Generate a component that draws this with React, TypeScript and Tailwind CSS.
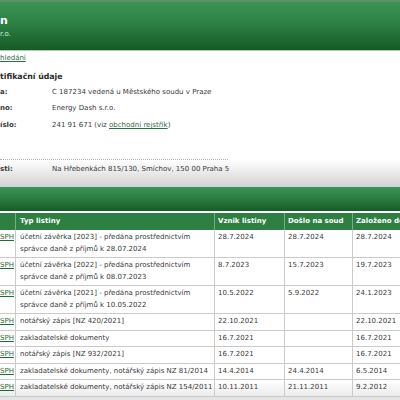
const rows = [
  { t: ["účetní závěrka [2023] - předána prostřednictvím", "správce daně z příjmů k 28.07.2024"], a: "28.7.2024", b: "28.7.2024", c: "28.7.2024" },
  { t: ["účetní závěrka [2022] - předána prostřednictvím", "správce daně z příjmů k 08.07.2023"], a: "8.7.2023", b: "15.7.2023", c: "19.7.2023" },
  { t: ["účetní závěrka [2021] - předána prostřednictvím", "správce daně z příjmů k 10.05.2022"], a: "10.5.2022", b: "5.9.2022", c: "24.1.2023" },
  { t: ["notářský zápis [NZ 420/2021]"], a: "22.10.2021", b: "", c: "22.10.2021" },
  { t: ["zakladatelské dokumenty"], a: "16.7.2021", b: "", c: "16.7.2021" },
  { t: ["notářský zápis [NZ 932/2021]"], a: "16.7.2021", b: "", c: "16.7.2021" },
  { t: ["zakladatelské dokumenty, notářský zápis NZ 81/2014"], a: "14.4.2014", b: "24.4.2014", c: "6.5.2014" },
  { t: ["zakladatelské dokumenty, notářský zápis NZ 154/2011"], a: "10.11.2011", b: "21.11.2011", c: "9.2.2012" },
];

export default function App() {
  return (
    <div className="w-[400px] h-[400px] overflow-hidden bg-white font-['DejaVu_Sans',Verdana,sans-serif] text-[7px] leading-[11px] text-[#3a3a3a]">
      {/* top header */}
      <div className="h-[50px] border-t-[2px] border-[#5f8f69] bg-gradient-to-b from-[#3a9455] via-[#2b7e42] to-[#165926] text-white">
        <div className="pt-[12px] text-[11px] leading-[13px] font-bold">n</div>
        <div className="pt-[3px] text-[7px] leading-[9px] text-[#d8ead9]">r.o.</div>
      </div>
      <div className="h-[1px] bg-[#a9cbb0]" />

      {/* back link */}
      <div className="h-[14px] pt-[2px]">
        <span className="text-[#2d6e3f] underline">hledání</span>
      </div>

      {/* heading */}
      <div className="h-[19px] pt-[7px] text-[7.8px] leading-[10px] font-bold text-[#2a2a2a]">tifikační údaje</div>

      {/* info rows */}
      <div className="flex flex-col">
        <div className="flex h-[16px] items-center">
          <div className="w-[52px] font-bold">a:</div>
          <div>C 187234 vedená u Městského soudu v Praze</div>
        </div>
        <div className="flex h-[17px] items-center">
          <div className="w-[52px] font-bold">no:</div>
          <div>Energy Dash s.r.o.</div>
        </div>
        <div className="flex h-[17px] items-center">
          <div className="w-[52px] font-bold">íslo:</div>
          <div>
            241 91 671 (viz <span className="text-[#2d6e3f] underline">obchodní rejstřík</span>)
          </div>
        </div>
      </div>
      <div className="h-[25px]" />
      <div className="w-[228px] border-t border-dotted border-[#b0b0b0]" />

      {/* address band */}
      <div className="h-[27px] bg-gradient-to-b from-[#ffffff] to-[#d2d2d2] pt-[3.5px]">
        <div className="flex">
          <div className="w-[52px] font-bold">sti:</div>
          <div>Na Hřebenkách 815/130, Smíchov, 150 00 Praha 5</div>
        </div>
      </div>

      {/* green band */}
      <div className="h-[24px] bg-gradient-to-b from-[#3a9555] via-[#2a7c41] to-[#175b28]" />
      <div className="h-[2px] bg-white" />

      {/* table header */}
      <div className="grid grid-cols-[16px_199px_70px_68px_47px] h-[17px] bg-[#2e7f42] text-white font-bold items-stretch">
        <div className="border-r border-[#78ac84]" />
        <div className="border-r border-[#78ac84] px-[4px] flex items-center">Typ listiny</div>
        <div className="border-r border-[#78ac84] px-[3px] flex items-center whitespace-nowrap">Vznik listiny</div>
        <div className="border-r border-[#78ac84] px-[3px] flex items-center whitespace-nowrap">Došlo na soud</div>
        <div className="px-[3px] flex items-center whitespace-nowrap overflow-hidden">Založeno do sbírky</div>
      </div>

      {/* rows */}
      {rows.map((r, i) => (
        <div
          key={i}
          className={`grid grid-cols-[16px_199px_70px_68px_47px] border-b border-[#cacaca] leading-[11.5px] ${i === rows.length - 1 ? "bg-gradient-to-b from-white to-[#ececec]" : "bg-white"}`}
        >
          <div className="border-r border-[#cacaca] py-[2px] text-right pr-[3px]">
            <span className="text-[#1f6b35] underline">SPH</span>
          </div>
          <div className="border-r border-[#cacaca] py-[2px] px-[4px] whitespace-nowrap overflow-hidden">
            {r.t.map((l, j) => (
              <div key={j}>{l}</div>
            ))}
          </div>
          <div className="border-r border-[#cacaca] py-[2px] px-[3px] whitespace-nowrap">{r.a}</div>
          <div className="border-r border-[#cacaca] py-[2px] px-[3px] whitespace-nowrap">{r.b}</div>
          <div className="py-[2px] px-[3px] whitespace-nowrap overflow-hidden">{r.c}</div>
        </div>
      ))}
      <div className="h-[10px] bg-[#e4e4e4]" />
    </div>
  );
}
